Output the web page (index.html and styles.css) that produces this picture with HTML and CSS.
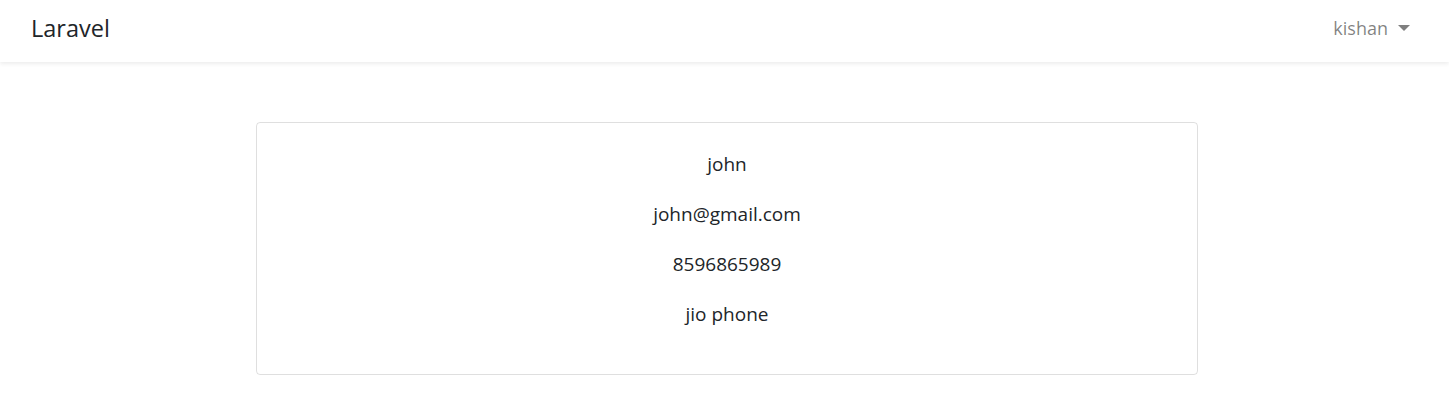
FILE: index.html
```html
<!DOCTYPE html>
<html>
<head>
<meta charset="utf-8">
<link rel="stylesheet" href="styles.css">
</head>
<body>
<nav class="navbar">
  <a class="brand" href="#">Laravel</a>
  <a class="user" href="#">kishan <span class="caret"></span></a>
</nav>
<main class="main">
  <div class="card">
    <p>john</p>
    <p>john@gmail.com</p>
    <p>8596865989</p>
    <p>jio phone</p>
  </div>
</main>
</body>
</html>
```
FILE: styles.css
```css
html, body { margin: 0; padding: 0; background: #fff; }
body { font-family: "Open Sans", "Noto Sans", sans-serif; color: #212529; }
.navbar {
  height: 62px;
  box-sizing: border-box;
  display: flex;
  align-items: center;
  justify-content: space-between;
  padding: 0 39px 6px 31px;
  background: #fff;
  box-shadow: 0 2px 4px rgba(0,0,0,.075);
}
.brand { font-size: 23.5px; color: #212529; text-decoration: none; }
.user { font-size: 18px; color: rgba(0,0,0,.5); text-decoration: none; display: flex; align-items: center; }
.caret {
  display: inline-block;
  margin-left: 10px;
  border-top: 6px solid rgba(0,0,0,.5);
  border-left: 6px solid transparent;
  border-right: 6px solid transparent;
}
.main { padding: 60px 0 40px 256px; }
.card {
  width: 942px;
  height: 253px;
  box-sizing: border-box;
  border: 1px solid rgba(0,0,0,.125);
  border-radius: 4px;
  padding: 27px 0 0;
  text-align: center;
  font-size: 19px;
}
.card p { margin: 0 0 22px; line-height: 28px; }
```
